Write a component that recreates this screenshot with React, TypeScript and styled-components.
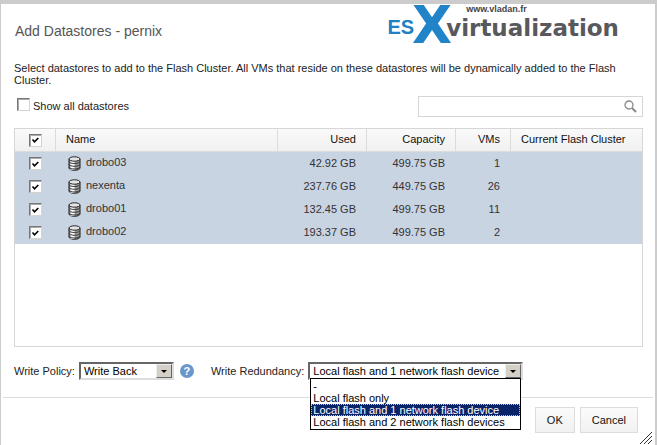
import React, { useState } from "react";
import styled, { createGlobalStyle, css } from "styled-components";

const GlobalStyle = createGlobalStyle`
  *, *::before, *::after { box-sizing: border-box; }
  body {
    margin: 0;
    background: #fff;
    color: #222;
    font: 11px/12px "Liberation Sans", Arial, sans-serif;
  }
  button, input, select { font: inherit; color: inherit; }
`;

const Dialog = styled.main`
  display: flex;
  flex-direction: column;
  min-height: 100vh;
  border: solid #ccc;
  border-width: 4px 2px 0 1px;
  background: #fff;
`;

const Header = styled.header`
  display: flex;
  justify-content: space-between;
  align-items: flex-start;
  height: 58px;
  padding: 0 36px 0 14px;
`;

const Title = styled.h1`
  margin: 18px 0 0;
  font-size: 14px;
  line-height: 18px;
  font-weight: 400;
  color: #555;
`;

const Logo = styled.div`
  display: flex;
  align-items: flex-start;
  font-weight: 700;
  white-space: nowrap;
`;

const LogoLead = styled.span`
  margin-top: 12px;
  font-size: 20px;
  line-height: 22px;
  color: #2080c4;
`;

const LogoMark = styled.span`
  margin: -10px 0 0 -2px;
  font: 700 52px/62px "DejaVu Sans", sans-serif;
  color: #2284c8;
`;

const LogoTail = styled.span`
  display: flex;
  flex-direction: column;
  margin-left: -6px;
  color: #58595d;
  font: 700 23px/28px "DejaVu Sans", sans-serif;
`;

const LogoSite = styled.span`
  margin-left: 20px;
  font: 700 9px/10px "Liberation Sans", sans-serif;
  color: #444;
`;

const Content = styled.section`
  display: flex;
  flex-direction: column;
  flex: 1;
  padding: 0 12px 0 13px;
`;

const Intro = styled.p`
  margin: 0;
  padding-right: 20px;
`;

const Toolbar = styled.div`
  display: flex;
  justify-content: space-between;
  align-items: center;
  height: 42px;
  padding-bottom: 2px;
`;

const CheckLabel = styled.label`
  display: flex;
  align-items: flex-start;
  gap: 3px;
  padding-left: 3px;
  line-height: 16px;
`;

const CheckBox = styled.input.attrs({ type: "checkbox" })`
  appearance: none;
  display: block;
  flex: none;
  width: 13px;
  height: 13px;
  margin: 0;
  border: 1px solid;
  border-color: #777 #d8d4cc #d8d4cc #777;
  background: #fff;
  box-shadow: inset 1px 1px #aaa;

  &:checked {
    background: #fff
      url("data:image/svg+xml,%3Csvg xmlns='http://www.w3.org/2000/svg' viewBox='0 0 10 10'%3E%3Cpath d='M2.5 4.5 4.5 6.8 8.3 3' fill='none' stroke='%23000' stroke-width='1.6'/%3E%3C/svg%3E")
      center / 10px 10px no-repeat;
  }
`;

const Search = styled.label`
  display: flex;
  align-items: center;
  width: 225px;
  height: 21px;
  padding-right: 5px;
  border: 1px solid #d6d6d6;
`;

const SearchInput = styled.input`
  flex: 1;
  min-width: 0;
  height: 100%;
  padding: 0 4px;
  border: 0;
  outline: 0;
  background: transparent;
`;

const GridFrame = styled.div`
  flex: 1;
  border: 1px solid #d6d6d6;
`;

const Grid = styled.table`
  width: 100%;
  table-layout: fixed;
  border-collapse: separate;
  border-spacing: 0;
`;

const Column = styled.col<{ $width?: number }>`
  ${(p) => p.$width && css`width: ${p.$width}px;`}
`;

const cell = css<{ $align?: "right" }>`
  height: 23px;
  padding: 0 10px 2px;
  text-align: ${(p) => p.$align ?? "left"};
  font-weight: 400;
  white-space: nowrap;
`;

const HeadCell = styled.th<{ $align?: "right"; $divided?: boolean }>`
  ${cell}
  color: #111;
  border-bottom: 1px solid #dcdcdc;
  ${(p) => p.$divided && css`border-right: 1px solid #dcdcdc;`}
`;

const HeadRow = styled.tr`
  background: linear-gradient(#fafafa, #f0f0f0);
`;

const Row = styled.tr<{ $selected: boolean }>`
  background: ${(p) => (p.$selected ? "#c9d4e3" : "#fff")};
`;

const Cell = styled.td<{ $align?: "right" }>`
  ${cell}
  padding-right: 11px;
  color: #333;
`;

const CheckHolder = styled.div`
  display: flex;
  justify-content: center;
  padding-top: 2px;
`;

const NameHolder = styled.div`
  display: flex;
  align-items: flex-start;
  gap: 5px;
  padding: 2px 0 0 2px;
`;

const Policies = styled.div`
  display: flex;
  align-items: center;
  gap: 17px;
  height: 50px;
  padding-bottom: 2px;
`;

const Field = styled.div`
  display: flex;
  align-items: center;
  gap: 4px;
`;

const SelectBox = styled.div<{ $width: number }>`
  position: relative;
  display: flex;
  width: ${(p) => p.$width}px;
  height: 18px;
  border: 2px solid;
  border-color: #666 #ddd #ddd #666;
  background: #fff;
`;

const Select = styled.select`
  appearance: none;
  flex: 1;
  min-width: 0;
  padding: 0 16px 0 3px;
  border: 0;
  border-radius: 0;
  outline: 0;
  background: transparent;
  color: #000;
`;

const SelectArrow = styled.span`
  position: absolute;
  top: 0;
  right: 0;
  display: flex;
  align-items: center;
  justify-content: center;
  width: 16px;
  height: 100%;
  border: 1px solid;
  border-color: #eee #666 #666 #eee;
  background: #d4d0c8;
  pointer-events: none;
`;

const OptionList = styled.ul`
  position: absolute;
  top: 100%;
  left: 0;
  right: 0;
  z-index: 1;
  margin: 0;
  padding: 1px 0;
  list-style: none;
  border: 1px solid #000;
  background: #fff;
  color: #000;
`;

const Option = styled.li<{ $active: boolean }>`
  height: 12px;
  padding-left: 2px;
  line-height: 12px;
  white-space: nowrap;
  cursor: default;
  ${(p) =>
    p.$active &&
    css`
      background: #0a246a;
      color: #fff;
      outline: 1px dotted #e0c080;
      outline-offset: -1px;
    `}
`;

const HelpButton = styled.button`
  width: 14px;
  height: 14px;
  margin-left: 2px;
  padding: 0;
  border: 0;
  border-radius: 50%;
  background: #6b96cb;
  color: #fff;
  font-weight: 700;
  line-height: 14px;
`;

const Footer = styled.footer`
  display: flex;
  justify-content: flex-end;
  gap: 5px;
  height: 48px;
  margin: 0 2px;
  padding: 9px 0 0;
  border-top: 1px solid #dcdcdc;
`;

const Button = styled.button`
  height: 26px;
  padding: 0 11px;
  border: 1px solid #dcdcdc;
  background: linear-gradient(#fbfbfb, #f1f1f1);
  color: #111;
`;

const Grip = styled.svg`
  align-self: flex-end;
  margin: 0 1px 1px -3px;
`;

function DatastoreIcon() {
  return (
    <svg width="13" height="15" viewBox="0 0 13 15" aria-hidden="true">
      <path d="M1 3v9c0 1.2 2.2 2.3 5.5 2.3s5.5-1.1 5.5-2.3V3z" fill="#999" stroke="#222" />
      <path d="M4.5 4.5v9.3" stroke="#fff" strokeWidth="4" />
      <path
        d="M1 5.5c0 1 2.2 2 5.5 2s5.5-1 5.5-2M1 8.3c0 1 2.2 2 5.5 2s5.5-1 5.5-2M1 11c0 1 2.2 2 5.5 2s5.5-1 5.5-2"
        fill="none"
        stroke="#333"
      />
      <ellipse cx="6.5" cy="3" rx="5.5" ry="2.2" fill="#e4e4e4" stroke="#222" />
    </svg>
  );
}

function Arrow() {
  return (
    <svg width="6" height="3" viewBox="0 0 6 3" aria-hidden="true">
      <path d="M0 0h6L3 3z" fill="#000" />
    </svg>
  );
}

const datastores = [
  { name: "drobo03", used: "42.92 GB", capacity: "499.75 GB", vms: 1 },
  { name: "nexenta", used: "237.76 GB", capacity: "449.75 GB", vms: 26 },
  { name: "drobo01", used: "132.45 GB", capacity: "499.75 GB", vms: 11 },
  { name: "drobo02", used: "193.37 GB", capacity: "499.75 GB", vms: 2 },
];

const redundancies = [
  "-",
  "Local flash only",
  "Local flash and 1 network flash device",
  "Local flash and 2 network flash devices",
];

export default function App() {
  const [selected, setSelected] = useState(datastores.map((d) => d.name));
  const [redundancy, setRedundancy] = useState(redundancies[2]);
  const [open, setOpen] = useState(true);
  const allSelected = selected.length === datastores.length;

  const toggle = (name: string) =>
    setSelected((s) => (s.includes(name) ? s.filter((n) => n !== name) : [...s, name]));

  return (
    <>
      <GlobalStyle />
      <Dialog>
        <Header>
          <Title>Add Datastores - pernix</Title>
          <Logo>
            <LogoLead>ES</LogoLead>
            <LogoMark>X</LogoMark>
            <LogoTail>
              <LogoSite>www.vladan.fr</LogoSite>
              virtualization
            </LogoTail>
          </Logo>
        </Header>
        <Content>
          <Intro>
            Select datastores to add to the Flash Cluster. All VMs that reside on these datastores
            will be dynamically added to the Flash Cluster.
          </Intro>
          <Toolbar>
            <CheckLabel>
              <CheckBox />
              Show all datastores
            </CheckLabel>
            <Search>
              <SearchInput type="text" aria-label="Search datastores" />
              <svg width="13" height="13" viewBox="0 0 13 13" fill="none" stroke="#888" aria-hidden="true">
                <circle cx="5" cy="5" r="4" strokeWidth="1.3" />
                <path d="m8 8 4 4" strokeWidth="2" />
              </svg>
            </Search>
          </Toolbar>
          <GridFrame>
            <Grid>
              <colgroup>
                <Column $width={41} />
                <Column />
                <Column $width={89} />
                <Column $width={89} />
                <Column $width={55} />
                <Column $width={131} />
              </colgroup>
              <thead>
                <HeadRow>
                  <HeadCell $divided>
                    <CheckHolder>
                      <CheckBox
                        aria-label="Select all"
                        checked={allSelected}
                        onChange={() => setSelected(allSelected ? [] : datastores.map((d) => d.name))}
                      />
                    </CheckHolder>
                  </HeadCell>
                  <HeadCell $divided>Name</HeadCell>
                  <HeadCell $align="right" $divided>Used</HeadCell>
                  <HeadCell $align="right" $divided>Capacity</HeadCell>
                  <HeadCell $align="right" $divided>VMs</HeadCell>
                  <HeadCell>Current Flash Cluster</HeadCell>
                </HeadRow>
              </thead>
              <tbody>
                {datastores.map((d) => (
                  <Row key={d.name} $selected={selected.includes(d.name)}>
                    <Cell>
                      <CheckHolder>
                        <CheckBox
                          aria-label={d.name}
                          checked={selected.includes(d.name)}
                          onChange={() => toggle(d.name)}
                        />
                      </CheckHolder>
                    </Cell>
                    <Cell>
                      <NameHolder>
                        <DatastoreIcon />
                        {d.name}
                      </NameHolder>
                    </Cell>
                    <Cell $align="right">{d.used}</Cell>
                    <Cell $align="right">{d.capacity}</Cell>
                    <Cell $align="right">{d.vms}</Cell>
                    <Cell />
                  </Row>
                ))}
              </tbody>
            </Grid>
          </GridFrame>
          <Policies>
            <Field>
              <label htmlFor="policy">Write Policy:</label>
              <SelectBox $width={95}>
                <Select id="policy" defaultValue="Write Back">
                  <option>Write Back</option>
                  <option>Write Through</option>
                </Select>
                <SelectArrow><Arrow /></SelectArrow>
              </SelectBox>
              <HelpButton type="button" aria-label="Write policy help">?</HelpButton>
            </Field>
            <Field>
              <label htmlFor="redundancy">Write Redundancy:</label>
              <SelectBox $width={215}>
                <Select
                  id="redundancy"
                  value={redundancy}
                  onMouseDown={(e) => {
                    e.preventDefault();
                    setOpen(!open);
                  }}
                  onChange={(e) => setRedundancy(e.target.value)}
                >
                  {redundancies.map((r) => (
                    <option key={r}>{r}</option>
                  ))}
                </Select>
                <SelectArrow><Arrow /></SelectArrow>
                {open && (
                  <OptionList role="listbox" aria-label="Write Redundancy">
                    {redundancies.map((r) => (
                      <Option
                        key={r}
                        role="option"
                        aria-selected={r === redundancy}
                        $active={r === redundancy}
                        onClick={() => {
                          setRedundancy(r);
                          setOpen(false);
                        }}
                      >
                        {r}
                      </Option>
                    ))}
                  </OptionList>
                )}
              </SelectBox>
            </Field>
          </Policies>
        </Content>
        <Footer>
          <Button type="button">OK</Button>
          <Button type="button">Cancel</Button>
          <Grip width="12" height="12" viewBox="0 0 12 12" stroke="#333" aria-hidden="true">
            <path d="M0 12 12 0M4 12l8-8M8 12l4-4" />
          </Grip>
        </Footer>
      </Dialog>
    </>
  );
}
